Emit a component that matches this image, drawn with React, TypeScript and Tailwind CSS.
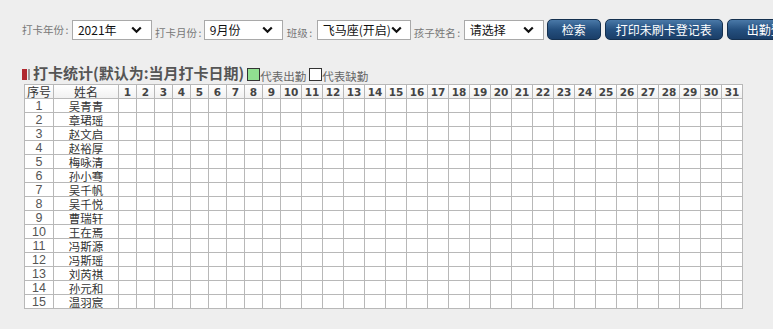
import React from "react";

const names = [
  "吴青青",
  "章珺瑶",
  "赵文启",
  "赵裕厚",
  "梅咏清",
  "孙小骞",
  "吴千帆",
  "吴千悦",
  "曹瑞轩",
  "王在焉",
  "冯斯源",
  "冯斯瑶",
  "刘芮祺",
  "孙元和",
  "温羽宸",
];

const days = Array.from({ length: 31 }, (_, i) => i + 1);

function Chevron() {
  return (
    <svg width="11" height="8" viewBox="0 0 11 8" className="shrink-0">
      <path d="M1.2 1.5 L5.5 5.8 L9.8 1.5" fill="none" stroke="#111" strokeWidth="2.2" />
    </svg>
  );
}

function Select({ value, width }: { value: string; width: string }) {
  return (
    <div
      className={`${width} h-[20px] shrink-0 bg-white border border-[#a9a9a9] flex items-center justify-between pl-[5px] pr-[9px] text-[12px] leading-[14px] text-[#111] whitespace-nowrap`}
    >
      <span>{value}</span>
      <Chevron />
    </div>
  );
}

function Label({ text }: { text: string }) {
  return (
    <span className="shrink-0 text-[10.5px] text-[#777] whitespace-nowrap">
      {text}
      <span className="mx-[1.5px]">:</span>
    </span>
  );
}

function Btn({ text, width }: { text: string; width: string }) {
  return (
    <div
      className={`${width} h-[21px] shrink-0 rounded-[5px] border border-[#14304f] bg-gradient-to-b from-[#4a79a8] via-[#25507f] to-[#1a3e68] text-white text-[12px] flex items-center justify-center whitespace-nowrap`}
    >
      {text}
    </div>
  );
}

export default function App() {
  return (
    <div
      className="w-[773px] h-[329px] overflow-hidden bg-[#eeeeee] pt-[19px] pl-[22px]"
      style={{ fontFamily: '"Noto Sans CJK SC", "Liberation Sans", sans-serif' }}
    >
      <div className="flex items-center w-[900px] h-[21px]">
        <Label text="打卡年份" />
        <div className="ml-[2px] shrink-0">
          <Select value="2021年" width="w-[80px]" />
        </div>
        <div className="ml-[3px] shrink-0">
          <Label text="打卡月份" />
        </div>
        <div className="ml-[1px] shrink-0">
          <Select value="9月份" width="w-[79px]" />
        </div>
        <div className="ml-[4px] shrink-0">
          <Label text="班级" />
        </div>
        <div className="ml-[3px] shrink-0">
          <Select value="飞马座(开启)" width="w-[94px]" />
        </div>
        <div className="ml-[3px] shrink-0">
          <Label text="孩子姓名" />
        </div>
        <div className="ml-[2px] shrink-0">
          <Select value="请选择" width="w-[80px]" />
        </div>
        <div className="ml-[3px] shrink-0">
          <Btn text="检索" width="w-[54px]" />
        </div>
        <div className="ml-[4px] shrink-0">
          <Btn text="打印未刷卡登记表" width="w-[118px]" />
        </div>
        <div className="ml-[4px] shrink-0">
          <Btn text="出勤登记表" width="w-[100px]" />
        </div>
      </div>

      <div className="flex items-end mt-[25px] h-[16px]">
        <div className="flex items-center h-[12px] mb-[1px]">
          <div className="w-[5px] h-[11px] bg-[#b0282e]" />
          <div className="w-[2px] h-[11px] bg-[#9a9a9a] ml-[1px]" />
        </div>
        <span className="ml-[3px] text-[15px] font-bold text-[#555] leading-[16px] whitespace-nowrap">
          打卡统计(默认为:当月打卡日期)
        </span>
        <div className="flex items-end ml-[3px]">
          <div className="w-[13px] h-[13px] bg-[#90e090] border border-[#333]" />
          <span className="text-[11.5px] text-[#666] leading-[13px] -mb-[2px]">代表出勤</span>
          <div className="ml-[3px] w-[13px] h-[13px] bg-white border border-[#333]" />
          <span className="text-[11.5px] text-[#666] leading-[13px] -mb-[2px]">代表缺勤</span>
        </div>
      </div>

      <table className="ml-[2px] mt-[3px] border-collapse table-fixed w-[719px] bg-white">
        <colgroup>
          <col className="w-[29px]" />
          <col className="w-[65px]" />
          {days.map((d) => (
            <col key={d} className={d < 10 ? "w-[18px]" : "w-[21px]"} />
          ))}
        </colgroup>
        <thead>
          <tr className="h-[14px] bg-gradient-to-b from-white to-[#f0f0f0]">
            <th className="border border-[#b8b8b8] p-0 text-[12px] leading-[12px] font-normal text-[#333]">
              序号
            </th>
            <th className="border border-[#b8b8b8] p-0 text-[12px] leading-[12px] font-normal text-[#333]">
              姓名
            </th>
            {days.map((d) => (
              <th
                key={d}
                className="border border-[#b8b8b8] p-0 leading-[12px] font-bold text-[#444]"
                style={{ fontFamily: '"DejaVu Sans", sans-serif', fontSize: "10.5px" }}
              >
                {d}
              </th>
            ))}
          </tr>
        </thead>
        <tbody>
          {names.map((n, i) => (
            <tr key={i} className="h-[14px]">
              <td
                className="border border-[#b8b8b8] p-0 text-center text-[12.5px] leading-[12px] text-[#555]"
                style={{ fontFamily: '"Liberation Sans", sans-serif' }}
              >
                {i + 1}
              </td>
              <td className="border border-[#b8b8b8] p-0 text-center text-[11.5px] leading-[12px] text-[#333]">
                {n}
              </td>
              {days.map((d) => (
                <td key={d} className="border border-[#b8b8b8] p-0" />
              ))}
            </tr>
          ))}
        </tbody>
      </table>
    </div>
  );
}
